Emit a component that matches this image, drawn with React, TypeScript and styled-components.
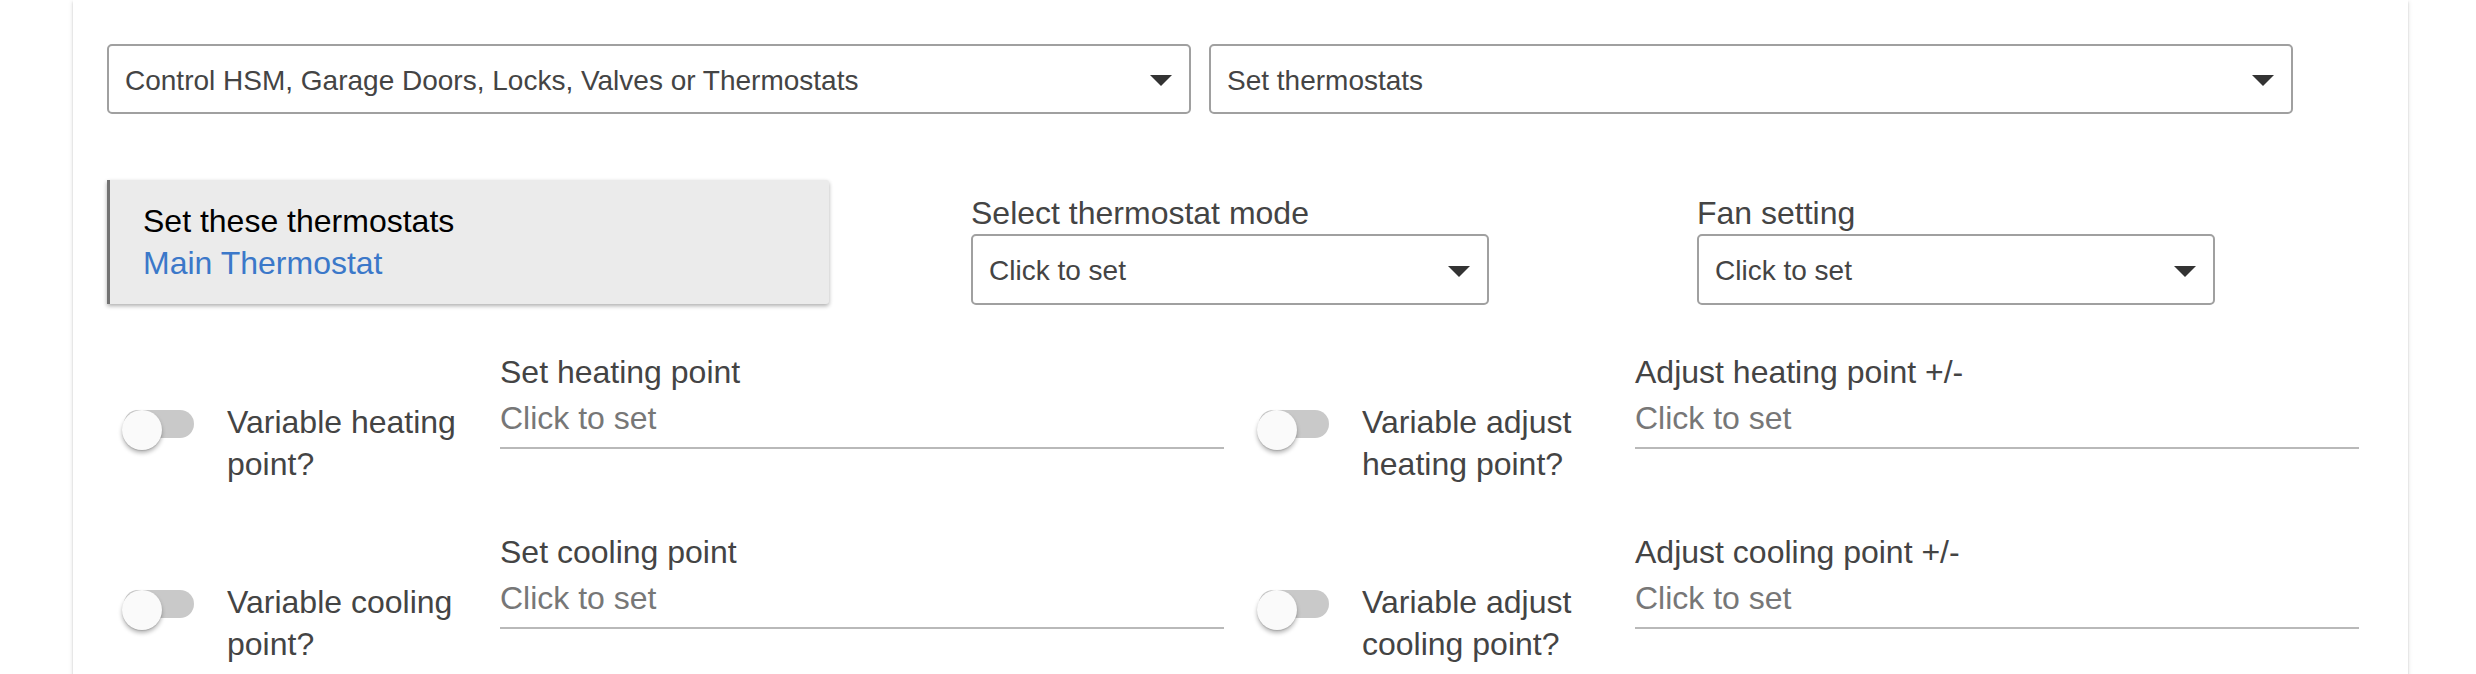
import React from 'react'
import styled, { createGlobalStyle } from 'styled-components'

const GlobalStyle = createGlobalStyle`
  html, body {
    margin: 0;
    padding: 0;
    background: #fff;
  }
  body {
    font-family: 'Liberation Sans', Arial, Helvetica, sans-serif;
    color: #444;
  }
`

const Page = styled.div`
  padding-left: 73px;
  height: 674px;
  overflow: hidden;
`

const Panel = styled.div`
  width: 2335px;
  min-height: 700px;
  box-sizing: border-box;
  background: #fff;
  padding: 44px 0 0 34px;
  box-shadow: 0 2px 2px 0 rgba(0, 0, 0, 0.14), 0 3px 1px -2px rgba(0, 0, 0, 0.2), 0 1px 5px 0 rgba(0, 0, 0, 0.12);
`

const SelectRow = styled.div`
  display: flex;
  gap: 18px;
`

const SelectBox = styled.div<{ $width: number; $height: number }>`
  width: ${p => p.$width}px;
  height: ${p => p.$height}px;
  box-sizing: border-box;
  border: 2px solid #a0a0a0;
  border-radius: 5px;
  display: flex;
  align-items: center;
  justify-content: space-between;
  padding: 3px 17px 0 16px;
  font-size: 28px;
  color: #444;
  background: #fff;
  cursor: pointer;
`

const Arrow = styled.span`
  width: 0;
  height: 0;
  border-left: 11px solid transparent;
  border-right: 11px solid transparent;
  border-top: 11px solid #333;
`

const SettingsRow = styled.div`
  display: flex;
  align-items: flex-start;
  margin-top: 66px;
`

const DeviceCard = styled.div`
  width: 722px;
  box-sizing: border-box;
  background: #ebebeb;
  border-left: 3px solid #737373;
  border-radius: 0 3px 3px 0;
  padding: 20px 33px;
  font-size: 32px;
  line-height: 42px;
  box-shadow: 0 2px 4px rgba(0, 0, 0, 0.32);
`

const CardTitle = styled.div`
  color: #000;
`

const CardLink = styled.div`
  color: #3b78c9;
  cursor: pointer;
`

const FieldGroup = styled.div<{ $offset: number }>`
  margin-left: ${p => p.$offset}px;
  margin-top: 12px;
  width: 518px;
`

const FieldLabel = styled.div`
  font-size: 32px;
  line-height: 42px;
  color: #444;
`

const ToggleGrid = styled.div`
  display: grid;
  grid-template-columns: repeat(2, 1102px);
  column-gap: 33px;
  row-gap: 46px;
  margin-top: 46px;
  padding-left: 15px;
`

const ToggleHalf = styled.div`
  display: flex;
  align-items: flex-start;
`

const ToggleSlot = styled.div`
  width: 105px;
  flex: none;
  padding-top: 53px;
`

const Switch = styled.div`
  position: relative;
  width: 72px;
  height: 40px;
  cursor: pointer;
`

const Track = styled.div`
  margin: 6px 0 0 2px;
  width: 70px;
  height: 28px;
  border-radius: 14px;
  background: #c9c9c9;
`

const Knob = styled.div`
  position: absolute;
  left: 0;
  top: 0;
  width: 40px;
  height: 40px;
  border-radius: 50%;
  background: #fafafa;
  box-shadow: 0 3px 4px rgba(0, 0, 0, 0.28), 0 1px 1px rgba(0, 0, 0, 0.12);
`

const SwitchLabel = styled.div`
  width: 273px;
  flex: none;
  box-sizing: border-box;
  padding-right: 8px;
  margin-top: 50px;
  font-size: 32px;
  line-height: 42px;
  color: #444;
`

const TextField = styled.div`
  width: 724px;
  flex: none;
`

const TextInput = styled.input`
  display: block;
  width: 100%;
  height: 56px;
  box-sizing: border-box;
  padding: 4px 0 8px;
  border: none;
  border-bottom: 2px solid #b9b9b9;
  outline: none;
  background: transparent;
  font-family: inherit;
  font-size: 32px;
  line-height: 42px;
  color: #444;
  &::placeholder {
    color: #777;
  }
`

const toggles = [
  { label: 'Variable heating point?', field: 'Set heating point' },
  { label: 'Variable adjust heating point?', field: 'Adjust heating point +/-' },
  { label: 'Variable cooling point?', field: 'Set cooling point' },
  { label: 'Variable adjust cooling point?', field: 'Adjust cooling point +/-' },
]

const App = () => {
  return (
    <Page>
      <GlobalStyle />
      <Panel>
        <SelectRow>
          <SelectBox $width={1084} $height={70}>
            <span>Control HSM, Garage Doors, Locks, Valves or Thermostats</span>
            <Arrow />
          </SelectBox>
          <SelectBox $width={1084} $height={70}>
            <span>Set thermostats</span>
            <Arrow />
          </SelectBox>
        </SelectRow>

        <SettingsRow>
          <DeviceCard>
            <CardTitle>Set these thermostats</CardTitle>
            <CardLink>Main Thermostat</CardLink>
          </DeviceCard>
          <FieldGroup $offset={142}>
            <FieldLabel>Select thermostat mode</FieldLabel>
            <SelectBox $width={518} $height={71}>
              <span>Click to set</span>
              <Arrow />
            </SelectBox>
          </FieldGroup>
          <FieldGroup $offset={208}>
            <FieldLabel>Fan setting</FieldLabel>
            <SelectBox $width={518} $height={71}>
              <span>Click to set</span>
              <Arrow />
            </SelectBox>
          </FieldGroup>
        </SettingsRow>

        <ToggleGrid>
          {toggles.map((item, index) => (
            <ToggleHalf key={index}>
              <ToggleSlot>
                <Switch>
                  <Track />
                  <Knob />
                </Switch>
              </ToggleSlot>
              <SwitchLabel>{item.label}</SwitchLabel>
              <TextField>
                <FieldLabel>{item.field}</FieldLabel>
                <TextInput placeholder="Click to set" />
              </TextField>
            </ToggleHalf>
          ))}
        </ToggleGrid>
      </Panel>
    </Page>
  )
}

export default App
